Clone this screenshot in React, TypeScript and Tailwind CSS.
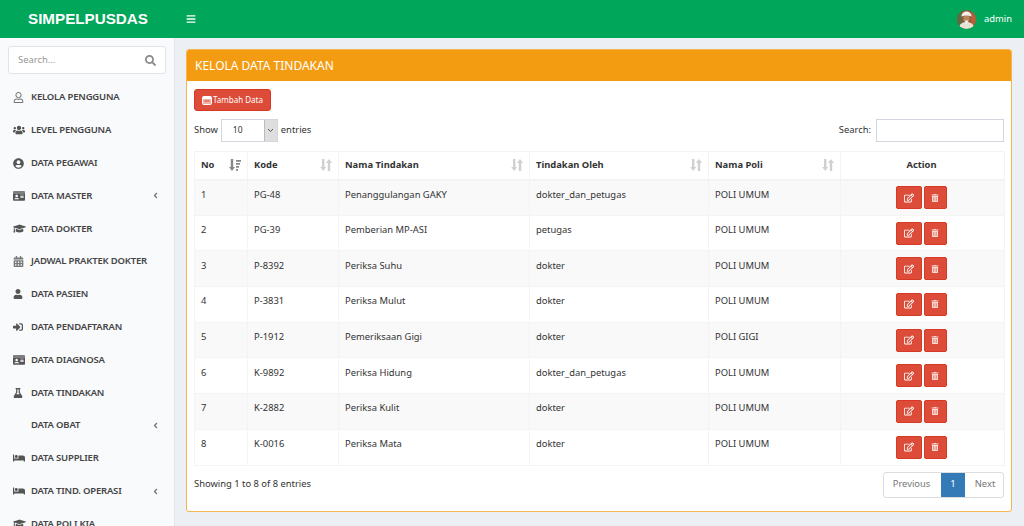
import { useState } from "react";
import {
  FaAngleLeft,
  FaBars,
  FaBed,
  FaCalendarAlt,
  FaFlask,
  FaGraduationCap,
  FaIdCard,
  FaRegEdit,
  FaRegUser,
  FaSearch,
  FaSignInAlt,
  FaTrashAlt,
  FaUser,
  FaUserCircle,
  FaUsers,
} from "react-icons/fa";
import type { IconType } from "react-icons";

type TMenu = {
  label: string;
  icon?: IconType;
  size?: number;
  tone?: string;
  arrow?: boolean;
};

type TRow = {
  no: number;
  kode: string;
  nama: string;
  oleh: string;
  poli: string;
};

const menus: TMenu[] = [
  { label: "KELOLA PENGGUNA", icon: FaRegUser, size: 11, tone: "text-[#777]" },
  { label: "LEVEL PENGGUNA", icon: FaUsers, size: 12 },
  { label: "DATA PEGAWAI", icon: FaUserCircle, size: 11 },
  { label: "DATA MASTER", icon: FaIdCard, size: 12, arrow: true },
  { label: "DATA DOKTER", icon: FaGraduationCap, size: 13 },
  { label: "JADWAL PRAKTEK DOKTER", icon: FaCalendarAlt, size: 11, tone: "text-[#777]" },
  { label: "DATA PASIEN", icon: FaUser, size: 10 },
  { label: "DATA PENDAFTARAN", icon: FaSignInAlt, size: 10 },
  { label: "DATA DIAGNOSA", icon: FaIdCard, size: 12 },
  { label: "DATA TINDAKAN", icon: FaFlask, size: 10 },
  { label: "DATA OBAT", arrow: true },
  { label: "DATA SUPPLIER", icon: FaBed, size: 12 },
  { label: "DATA TIND. OPERASI", icon: FaBed, size: 12, arrow: true },
  { label: "DATA POLI KIA", icon: FaGraduationCap, size: 13 },
];

const rows: TRow[] = [
  { no: 1, kode: "PG-48", nama: "Penanggulangan GAKY", oleh: "dokter_dan_petugas", poli: "POLI UMUM" },
  { no: 2, kode: "PG-39", nama: "Pemberian MP-ASI", oleh: "petugas", poli: "POLI UMUM" },
  { no: 3, kode: "P-8392", nama: "Periksa Suhu", oleh: "dokter", poli: "POLI UMUM" },
  { no: 4, kode: "P-3831", nama: "Periksa Mulut", oleh: "dokter", poli: "POLI UMUM" },
  { no: 5, kode: "P-1912", nama: "Pemeriksaan Gigi", oleh: "dokter", poli: "POLI GIGI" },
  { no: 6, kode: "K-9892", nama: "Periksa Hidung", oleh: "dokter_dan_petugas", poli: "POLI UMUM" },
  { no: 7, kode: "K-2882", nama: "Periksa Kulit", oleh: "dokter", poli: "POLI UMUM" },
  { no: 8, kode: "K-0016", nama: "Periksa Mata", oleh: "dokter", poli: "POLI UMUM" },
];

// sort arrows from the datatable header
const SortIcon = ({ active }: { active?: boolean }) => (
  <svg width="12" height="12" viewBox="0 0 12 12" className={active ? "text-[#888]" : "text-[#d0d0d0]"} fill="currentColor">
    {active ? (
      <>
        <path d="M1.800 0h2.400v8H6l-3 4-3-4h1.800z" />
        <path d="M7 1h5v1.800H7zM7 4h4v1.800H7zM7 7h3v1.800H7zM7 10h2v1.800H7z" />
      </>
    ) : (
      <>
        <path d="M2 0h2.400v8h1.800l-3 4-3-4H2z" />
        <path d="M7.800 12h2.400V4H12L9 0 6 4h1.800z" />
      </>
    )}
  </svg>
);

const Avatar = () => (
  <svg width="19" height="19" viewBox="0 0 19 19" className="rounded-full">
    <rect width="19" height="19" fill="#8a5a3a" />
    <rect x="0" y="0" width="5" height="19" fill="#5f6b3f" />
    <rect x="14" y="0" width="5" height="19" fill="#b5603a" />
    <path d="M2 19c0-5 3-7 7.500-7s7.500 2 7.500 7z" fill="#e6e2d6" />
    <circle cx="9.500" cy="8.500" r="3.200" fill="#b98458" />
    <path d="M4.500 6.500C4.500 3 7 1.500 9.500 1.500s5 1.500 5 5c-3-1.200-7-1.200-10 0z" fill="#f4f2ea" />
    <path d="M7.500 10.500h4L9.500 14z" fill="#f4f2ea" />
  </svg>
);

// small form icon on the add button
const FormIcon = () => (
  <svg width="10" height="9" viewBox="0 0 10 9">
    <rect x="0.500" y="0.500" width="9" height="8" rx="1" fill="#f3b0a6" stroke="#fff" strokeWidth="1" />
    <rect x="1" y="1" width="8" height="2" fill="#fff" />
    <rect x="2.500" y="4.500" width="5" height="1" fill="#dd4b39" />
  </svg>
);

const SidebarItem = ({ label, icon: Icon, size, tone, arrow }: TMenu) => (
  <li className="flex h-[32.8px] items-center pr-[14px] pl-[13px] text-[#444]">
    <span className={`flex w-[18px] justify-start ${tone ?? "text-[#555]"}`}>
      {Icon && <Icon size={size} />}
    </span>
    <span className="text-[9.5px] font-semibold tracking-[-0.2px]">{label}</span>
    {arrow && <FaAngleLeft size={9} className="ml-auto text-[#777]" />}
  </li>
);

const App = () => {
  const [search, setSearch] = useState("");

  return (
    <div className="flex h-[526px] w-[1024px] flex-col overflow-hidden bg-[#ecf0f5] font-['Noto_Sans',sans-serif] text-[9.4px] text-[#333]">
      <header className="flex h-[38px] shrink-0 items-center bg-[#00a65a] text-white">
        <div className="w-[174px] pl-[28px] font-['Liberation_Sans',sans-serif] text-[15.2px] font-bold">SIMPELPUSDAS</div>
        <FaBars size={10} className="ml-[12px]" />
        <div className="ml-auto flex items-center gap-2 pr-[12px]">
          <Avatar />
          <span>admin</span>
        </div>
      </header>

      <div className="flex min-h-0 flex-1">
        <aside className="w-[175px] shrink-0 overflow-hidden border-r border-[#e2e6ec] bg-[#f9fafc]">
          <div className="mx-[8px] mt-[8px] mb-[7.200px] flex h-[28px] items-center justify-between rounded-[3px] border border-[#dfe3ea] bg-white pr-[9px] pl-[9px]">
            <span className="text-[#999]">Search...</span>
            <FaSearch size={11} className="text-[#888]" />
          </div>
          <ul>
            {menus.map((menu) => (
              <SidebarItem key={menu.label} {...menu} />
            ))}
          </ul>
        </aside>

        <main className="min-w-0 flex-1 pt-[11px] pr-[12px] pl-[11px]">
          <section className="h-[463px] overflow-hidden rounded-[3px] border border-[#f6b550] bg-white">
            <div className="flex h-[31px] items-center bg-[#f39c12] px-2 text-[12px] text-white">KELOLA DATA TINDAKAN</div>
            <div className="px-[7px] pt-2">
              <button className="flex h-[22px] w-[77px] items-center justify-center gap-[1px] rounded-[3px] border border-[#d73925] bg-[#dd4b39] text-[8px] text-white">
                <FormIcon />
                Tambah Data
              </button>
              <div className="mt-2 flex h-[23px] items-center justify-between">
                <div className="flex items-center gap-[3px]">
                  <span>Show</span>
                  <div className="flex h-[23px] w-[57px] items-center border border-[#d2d6de] bg-white">
                    <span className="flex-1 pl-[11px] text-[8.500px]">10</span>
                    <span className="flex h-full w-[13px] items-center justify-center border-l border-[#bbb] bg-[#dedede] text-[#555]">
                      <svg width="7" height="5" viewBox="0 0 7 5" fill="none" stroke="currentColor">
                        <path d="M1 1l2.500 2.500L6 1" />
                      </svg>
                    </span>
                  </div>
                  <span>entries</span>
                </div>
                <label className="flex items-center gap-[5px]">
                  Search:
                  <input
                    value={search}
                    onChange={(e) => setSearch(e.target.value)}
                    className="h-[23px] w-[128px] border border-[#d2d6de] bg-white outline-none"
                  />
                </label>
              </div>

              <table className="mt-[9px] w-[810px] table-fixed border-collapse border border-[#f4f4f4]">
                <colgroup>
                  <col className="w-[53px]" />
                  <col className="w-[91px]" />
                  <col className="w-[191px]" />
                  <col className="w-[179px]" />
                  <col className="w-[132px]" />
                  <col className="w-[164px]" />
                </colgroup>
                <thead>
                  <tr className="h-[28px] border-b-2 border-[#f4f4f4] text-left">
                    {["No", "Kode", "Nama Tindakan", "Tindakan Oleh", "Nama Poli"].map((title, i) => (
                      <th key={title} className="border-r border-[#f4f4f4] px-[6px] font-bold">
                        <div className="flex items-center justify-between">
                          {title}
                          <SortIcon active={i === 0} />
                        </div>
                      </th>
                    ))}
                    <th className="pr-[2px] text-center font-bold">Action</th>
                  </tr>
                </thead>
                <tbody>
                  {rows.map((row) => (
                    <tr key={row.no} className="h-[35.700px] border-b border-[#f4f4f4] odd:bg-[#f9f9f9]">
                      <td className="border-r border-[#f4f4f4] px-[6px] pb-[6px]">{row.no}</td>
                      <td className="border-r border-[#f4f4f4] px-[6px] pb-[6px]">{row.kode}</td>
                      <td className="border-r border-[#f4f4f4] px-[6px] pb-[6px]">{row.nama}</td>
                      <td className="border-r border-[#f4f4f4] px-[6px] pb-[6px]">{row.oleh}</td>
                      <td className="border-r border-[#f4f4f4] px-[6px] pb-[6px]">{row.poli}</td>
                      <td>
                        <div className="flex justify-center gap-[2px] pr-[3px]">
                          <button className="flex h-[23px] w-[26px] items-center justify-center rounded-[2px] border border-[#d73925] bg-[#dd4b39] text-white">
                            <FaRegEdit size={10} />
                          </button>
                          <button className="flex h-[23px] w-[23px] items-center justify-center rounded-[2px] border border-[#d73925] bg-[#dd4b39] text-[#fbdcd7]">
                            <FaTrashAlt size={8} />
                          </button>
                        </div>
                      </td>
                    </tr>
                  ))}
                </tbody>
              </table>

              <div className="mt-[6px] flex items-center justify-between">
                <span>Showing 1 to 8 of 8 entries</span>
                <div className="flex h-[26px] overflow-hidden rounded-[3px] border border-[#ddd] text-[#777]">
                  <span className="flex w-[57px] items-center justify-center pr-[2px]">Previous</span>
                  <span className="flex w-[24px] items-center justify-center bg-[#337ab7] text-white">1</span>
                  <span className="flex w-[38px] items-center justify-center pl-[2px]">Next</span>
                </div>
              </div>
            </div>
          </section>
        </main>
      </div>
    </div>
  );
};

export default App;
